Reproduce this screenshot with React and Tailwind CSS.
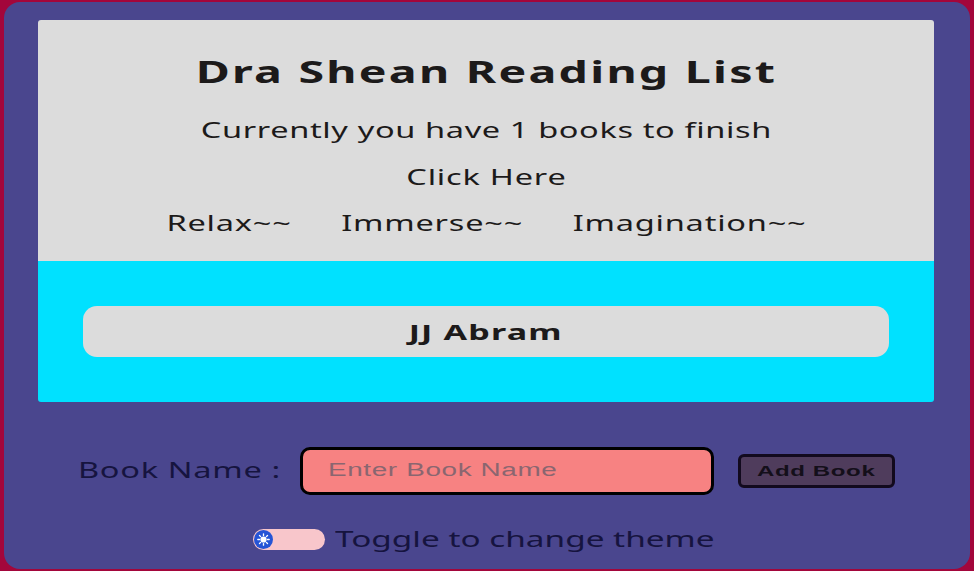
import React from "react";

export default function App() {
  return (
    <div className="w-[974px] h-[571px] overflow-hidden bg-[#a3063b] pl-[4px] pr-[4px] pt-[2px] pb-[2px]" style={{ fontFamily: '"Noto Sans", sans-serif' }}>
      <div className="w-full h-full rounded-[16px] bg-[#4a468e] pl-[34px] pr-[36px] pt-[18px] flex flex-col">
        <div className="bg-[#dcdcdc] h-[241px] rounded-t-[3px] text-[#1c1a1a]">
          <div className="mx-auto w-fit flex flex-col items-center scale-x-[1.55]">
            <h1 className="mt-[32px] text-[30px] leading-[40px] font-bold tracking-[1.45px] whitespace-nowrap">Dra Shean Reading List</h1>
            <p className="mt-[23px] text-[21px] leading-[30px] tracking-[0.4px] whitespace-nowrap">Currently you have 1 books to finish</p>
            <p className="mt-[17px] text-[21px] leading-[30px] tracking-[0.5px]">Click Here</p>
            <div className="mt-[16px] flex gap-[32px] text-[21px] leading-[30px] tracking-[0.5px] whitespace-nowrap">
              <span>Relax~~</span>
              <span>Immerse~~</span>
              <span>Imagination~~</span>
            </div>
          </div>
        </div>
        <div className="bg-[#00e1ff] h-[141px] rounded-b-[3px] pl-[45px] pr-[45px] pt-[45px]">
          <div className="h-[51px] rounded-[14px] bg-[#dcdcdc] flex items-center justify-center text-[22px] font-bold text-[#1c1a1a]">
            <span className="inline-block scale-x-[1.55] tracking-[0.75px]">JJ Abram</span>
          </div>
        </div>
        <div className="mt-[45px] flex items-center h-[48px]">
          <div className="ml-[40px] w-[200px] text-[21px] text-[#16143f] whitespace-nowrap">
            <span className="inline-block origin-left scale-x-[1.55] tracking-[0.45px]">Book Name :</span>
          </div>
          <div className="relative ml-[22px] w-[414px] h-[48px]">
            <input
              aria-label="Enter Book Name"
              className="w-full h-full rounded-[10px] border-[3px] border-black bg-[#f78282] pl-[25px] text-[18px] outline-none"
              style={{ fontFamily: '"Liberation Sans", Arial, sans-serif' }}
            />
            <span
              className="pointer-events-none absolute left-[28px] top-[12px] inline-block origin-left scale-x-[1.55] text-[18px] leading-[22px] tracking-[0.4px] text-[#8a6670] whitespace-nowrap"
              style={{ fontFamily: '"Liberation Sans", Arial, sans-serif' }}
            >
              Enter Book Name
            </span>
          </div>
          <button
            className="ml-[24px] w-[157px] h-[34px] rounded-[6px] border-[3px] border-[#120a1e] bg-[#4f3c5c] flex items-center justify-center text-[15.5px] font-bold text-[#140f1a]"
            style={{ fontFamily: '"Liberation Sans", Arial, sans-serif' }}
          >
            <span className="inline-block scale-x-[1.55] tracking-[0.4px]">Add Book</span>
          </button>
        </div>
        <div className="mt-[29px] flex items-center justify-center pr-[2px]">
          <div className="w-[72px] h-[21px] rounded-full bg-[#f8c6cb] flex items-center pl-[1px]">
            <div className="w-[19px] h-[19px] rounded-full bg-[#2554d6] flex items-center justify-center">
              <svg width="13" height="13" viewBox="0 0 24 24" fill="none" stroke="white" strokeWidth="2.5" strokeLinecap="round">
                <circle cx="12" cy="12" r="4.5" fill="white" />
                <path d="M12 1.5v3M12 19.5v3M1.5 12h3M19.5 12h3M4.6 4.6l2.1 2.1M17.3 17.3l2.1 2.1M4.6 19.4l2.1-2.1M17.3 6.7l2.1-2.1" />
              </svg>
            </div>
          </div>
          <div className="ml-[10px] w-[382px] text-[21.5px] leading-[30px] text-[#16143f] whitespace-nowrap">
            <span className="inline-block origin-left scale-x-[1.55]">Toggle to change theme</span>
          </div>
        </div>
      </div>
    </div>
  );
}
